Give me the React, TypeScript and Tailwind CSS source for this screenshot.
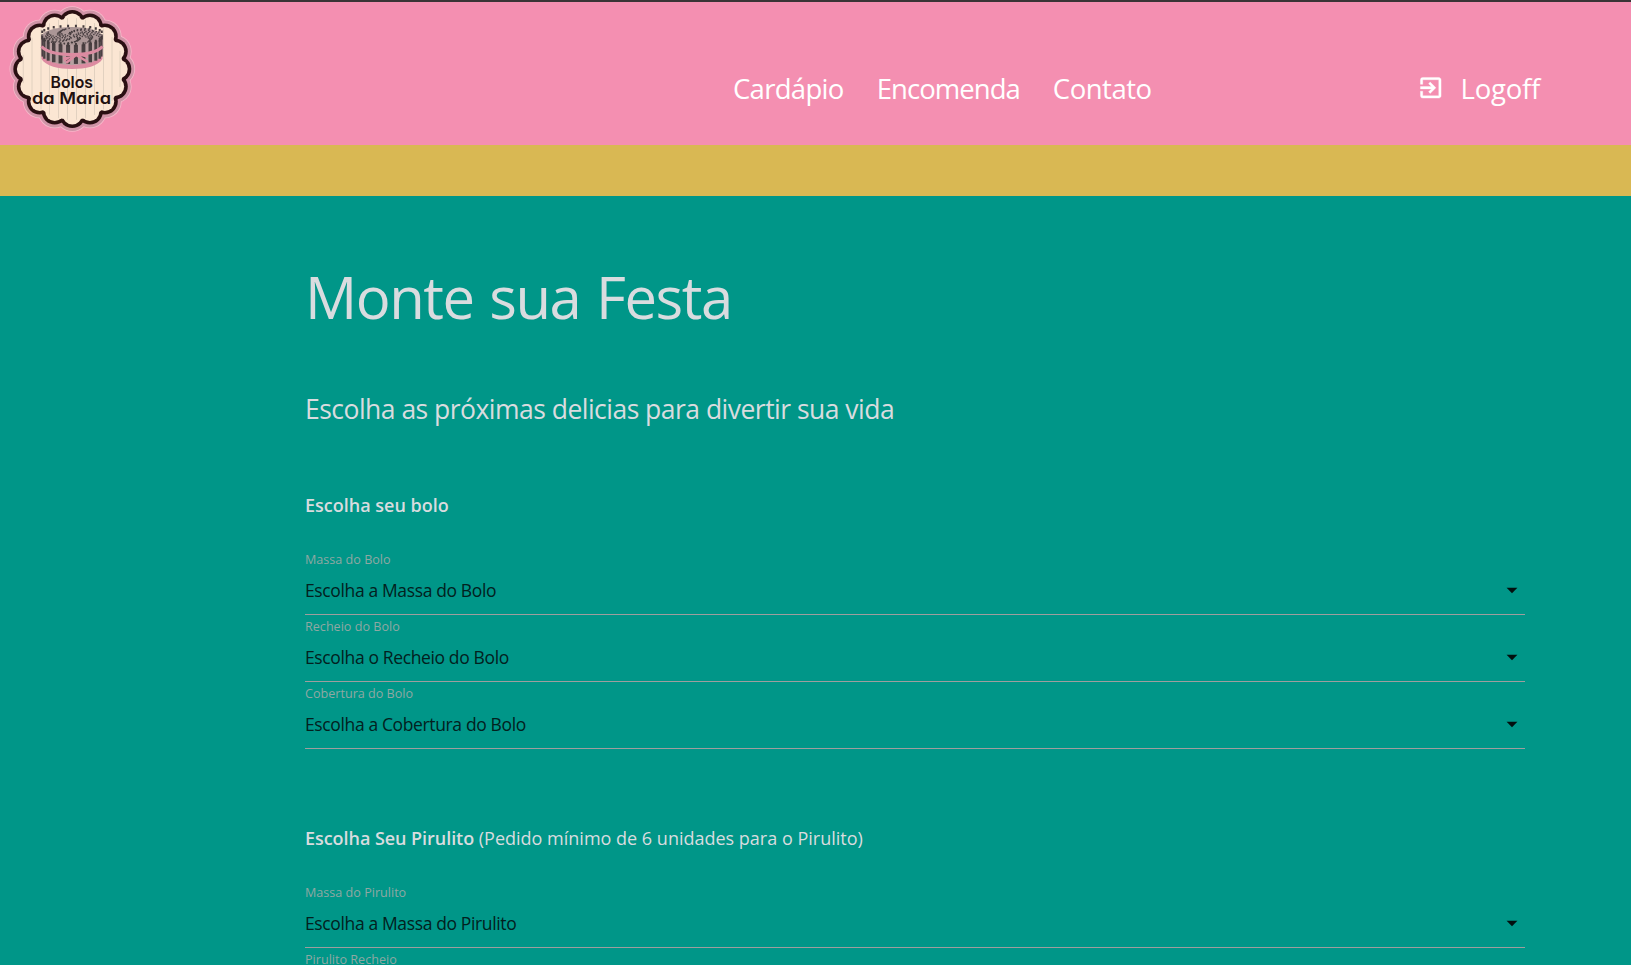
const Field = ({ label, value }: { label: string; value: string }) => (
  <div className="h-[67px] w-full">
    <label className="block h-[18px] text-[12.6px] leading-[17px] text-[#8fa8a3]">{label}</label>
    <div className="flex h-[46px] items-center justify-between border-b border-[#9e9e9e] pb-[3px]">
      <span className="text-[17.5px] leading-[40px] tracking-[-0.37px] text-[#03211e]">{value}</span>
      <svg width="26" height="26" viewBox="0 0 24 24" fill="#02100f">
        <path d="M7 10l5 5 5-5z" />
      </svg>
    </div>
  </div>
);

const scallops = Array.from({ length: 16 }, (_, i) => {
  const a = (i / 16) * Math.PI * 2;
  return [72.3 + Math.cos(a) * 46, 69 + Math.sin(a) * 46] as const;
});

const Scallop = ({ r, fill }: { r: number; fill: string }) => (
  <g fill={fill}>
    {scallops.map(([x, y], i) => <circle key={i} cx={x} cy={y} r={r} />)}
    <circle cx="72.3" cy="69" r="48" />
  </g>
);

const lines = [23.3, 32, 41, 49.5, 58.5, 67.5, 76.5, 85.5, 94.5, 103.5, 112, 120];
const speckles = Array.from({ length: 170 }, (_, i) => {
  const a = i * 2.4;
  const d = Math.sqrt((i + 0.5) / 170);
  return [72 + Math.cos(a + (i % 3) * 0.2) * d * 29, 36 + Math.sin(a) * d * 8] as const;
});
const wafers = Array.from({ length: 12 }, (_, i) => {
  const a = Math.PI * ((i + 0.5) / 12);
  return [72 - Math.cos(a) * 30, Math.sin(a) * 8.5] as const;
});

const Logo = () => (
  <svg width="143" height="143" viewBox="0 2 143 143">
    <Scallop r={16.8} fill="#f7b9ca" />
    <Scallop r={16} fill="#cf93a6" />
    <Scallop r={13} fill="#2a0f12" />
    <Scallop r={9.4} fill="#fbe6d3" />
    <circle cx="72.3" cy="69" r="50.5" fill="#fbe6d3" />
    {lines.map((x) => {
      const h = Math.sqrt(51 * 51 - (x - 72.3) * (x - 72.3));
      return <path key={x} d={`M${x} ${69 - h}V${69 + h}`} stroke="#dccbbb" strokeWidth="0.8" />;
    })}
    <path d="M41.500 35V59C46 66 58 69 72 69S98 66 102.500 59V35Z" fill="#dc8ba1" />
    <path d="M41.500 35V55C46 61.500 58 65 72 65S98 61.500 102.500 55V35Z" fill="#b8a0a1" />
    {wafers.map(([x, dy], i) => (
      <path key={i} d={`M${x} ${33 + dy}V${55.500 + dy}`} stroke="#4a4042" strokeWidth={1.2 + dy * 0.34} />
    ))}
    <path d="M41.500 46.500C47 52.500 58 54.500 72 54.500S97 52.500 102.500 46.500" fill="none" stroke="#dc8ba1" strokeWidth="3.200" />
    <path d="M76 55L66 63M76 55L88 62" fill="none" stroke="#dc8ba1" strokeWidth="2.600" />
    <path d="M77 55L87 52.500L88 58ZM73 56L63 57L64 62Z" fill="#dc8ba1" />
    <ellipse cx="72" cy="36" rx="30" ry="9" fill="#ab9696" />
    {wafers.map(([x, dy], i) => (
      <path key={i} d={`M${x} ${34 - dy * 0.8}v-2.500M${x} ${34.500 + dy}v4`} stroke="#453b3d" strokeWidth="2" />
    ))}
    {speckles.map(([x, y], i) => <circle key={i} cx={x} cy={y} r="0.8" fill="#463d3f" />)}
    <g
      className="font-['Inter',sans-serif] text-[16.5px] font-semibold [font-feature-settings:'cv11']"
      fill="#22100f"
    >
      <text x="50.500" y="88" textLength="42.500" lengthAdjust="spacingAndGlyphs">Bolos</text>
      <text x="32" y="104" textLength="79" lengthAdjust="spacingAndGlyphs">da Maria</text>
    </g>
  </svg>
);

export default function App() {
  return (
    <div className="h-[965px] w-full overflow-hidden bg-[#009688] font-['Open_Sans',sans-serif]">
      <header className="flex h-[145px] justify-between border-t-2 border-[#3a3436] bg-[#f48fb1] pr-[91px] text-[27.5px] leading-[40px] text-white">
        <div className="flex">
          <div className="w-[733px]"><Logo /></div>
          <nav className="flex gap-[33px] pt-[67px]">
            <a className="tracking-[-0.7px]">Cardápio</a>
            <a className="tracking-[-0.95px]">Encomenda</a>
            <a className="tracking-[-0.5px]">Contato</a>
          </nav>
        </div>
        <a className="flex gap-[16px] pt-[67px] tracking-[-0.25px]">
          <svg className="mt-[5px]" width="27.500" height="27.500" viewBox="0 0 24 24" fill="#fff" stroke="#fff" strokeWidth="0.3">
            <path d="M10.090 15.590L11.500 17l5-5-5-5-1.410 1.410L12.670 11H3v2h9.670l-2.580 2.590zM19 3H5a2 2 0 0 0-2 2v4h2V5h14v14H5v-4H3v4a2 2 0 0 0 2 2h14c1.100 0 2-.9 2-2V5c0-1.100-.9-2-2-2z" />
          </svg>
          <span>Logoff</span>
        </a>
      </header>
      <div className="h-[51px] bg-[#d9b853]" />
      <main className="ml-[305px] w-[1220px] text-[#d9dcdf]">
        <h1 className="pt-[65px] text-[58px] leading-[72px] tracking-[-1.45px] [word-spacing:2px]">Monte sua Festa</h1>
        <h2 className="pt-[56px] text-[26.5px] leading-[40px] tracking-[-0.52px]">Escolha as próximas delicias para divertir sua vida</h2>
        <p className="pt-[56px] text-[18px] leading-[40px]"><b className="font-semibold">Escolha seu bolo</b></p>
        <div className="pt-[26px]">
          <Field label="Massa do Bolo" value="Escolha a Massa do Bolo" />
          <Field label="Recheio do Bolo" value="Escolha o Recheio do Bolo" />
          <Field label="Cobertura do Bolo" value="Escolha a Cobertura do Bolo" />
        </div>
        <p className="pt-[66px] text-[18px] leading-[40px]"><b className="font-semibold tracking-[-0.05px]">Escolha Seu Pirulito</b> (Pedido mínimo de 6 unidades para o Pirulito)</p>
        <div className="pt-[26px]">
          <Field label="Massa do Pirulito" value="Escolha a Massa do Pirulito" />
          <Field label="Pirulito Recheio" value="" />
        </div>
      </main>
    </div>
  );
}
